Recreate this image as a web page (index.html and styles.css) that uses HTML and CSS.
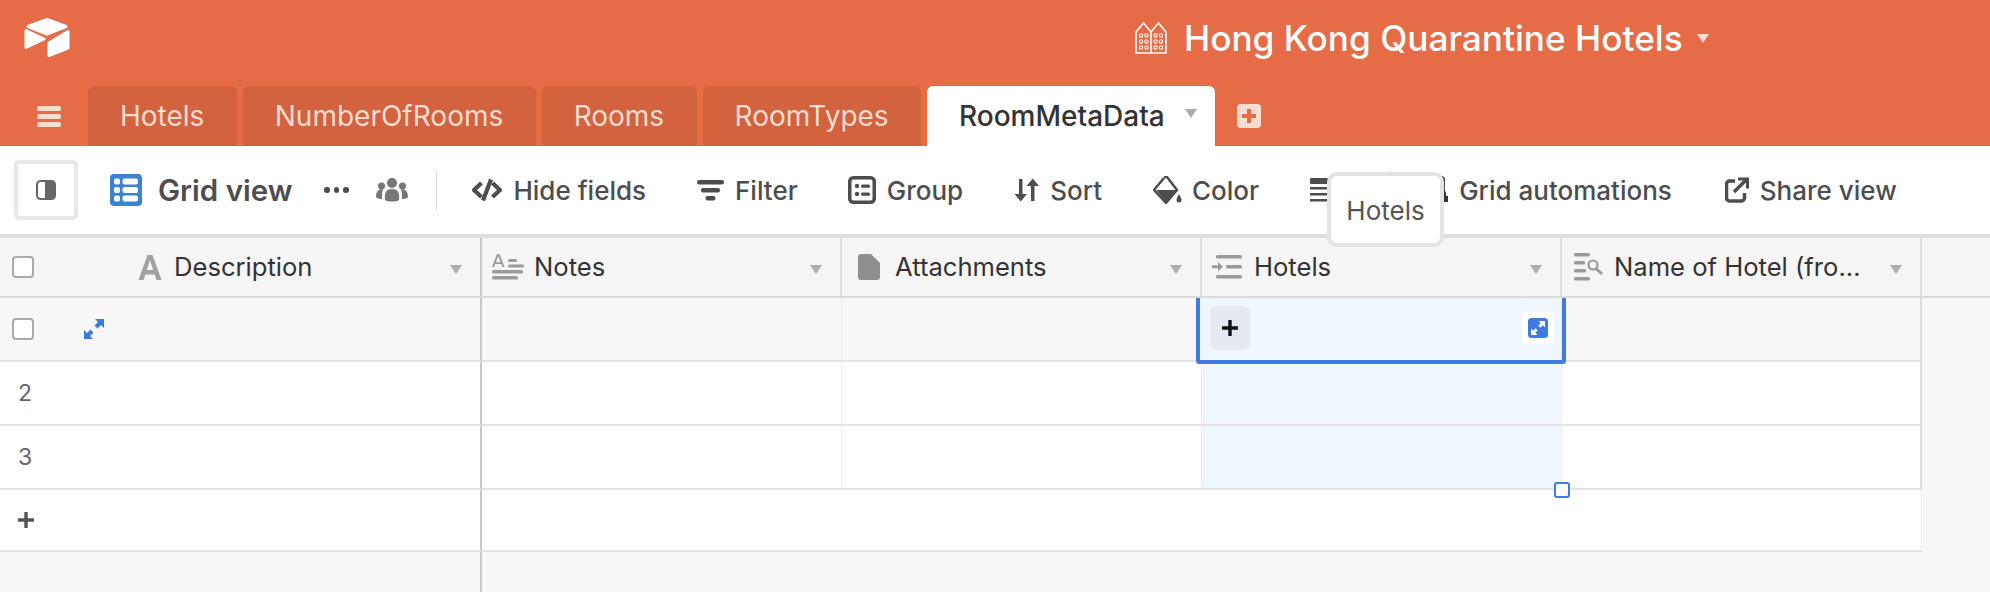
FILE: index.html
```html
<!DOCTYPE html>
<html lang="en">
<head>
<meta charset="utf-8">
<title>Hong Kong Quarantine Hotels</title>
<link rel="stylesheet" href="styles.css">
</head>
<body>
<header class="appbar">
  <div class="appbar-top">
    <svg class="logo" viewBox="0 0 46 39"><path d="M23 1.500 42 8.500 23 16 4 8.500Z"/><path d="M2 12.500 20 21 2 29.500Z"/><path d="M25 25 44 13.500V30L25 37.500Z"/></svg>
    <div class="base-title">
      <svg class="building" viewBox="0 0 32 32"><path class="outline" d="M1 31V10L8.500 1 16 10 23.500 1 31 10V31ZM16 10V31"/><path class="outline thin" d="M4.500 12h3v3h-3zM10 12h3v3h-3zM19 12h3v3h-3zM24.500 12h3v3h-3zM4.500 18h3v3h-3zM10 18h3v3h-3zM19 18h3v3h-3zM24.500 18h3v3h-3zM4.500 24h3v3h-3zM10 24h3v3h-3zM19 24h3v3h-3zM24.500 24h3v3h-3z"/></svg>
      <span class="base-name">Hong Kong Quarantine Hotels</span>
      <span class="caret caret-light"></span>
    </div>
  </div>
  <nav class="tabs">
    <div class="menu"><span></span><span></span><span></span></div>
    <div class="tab">Hotels</div>
    <div class="tab">NumberOfRooms</div>
    <div class="tab">Rooms</div>
    <div class="tab">RoomTypes</div>
    <div class="tab tab-active">RoomMetaData<span class="caret caret-tab"></span></div>
    <svg class="add-tab" viewBox="0 0 24 24"><rect width="24" height="24" rx="4" fill="#fbdcd2"/><path d="M12 5v14M5 12h14" stroke="#e66c47" stroke-width="4"/></svg>
  </nav>
</header>

<section class="toolbar">
  <div class="side-btn">
    <svg viewBox="0 0 20 20" width="20" height="20"><rect x="1" y="1" width="18" height="18" rx="3.500" fill="#fff" stroke="#666" stroke-width="2"/><path d="M9 1h7a3 3 0 0 1 3 3v12a3 3 0 0 1-3 3H9Z" fill="#666"/></svg>
  </div>
  <svg class="grid-icon" viewBox="0 0 32 32"><rect width="32" height="32" rx="4" fill="#3d82cf"/><g fill="#fff"><rect x="4" y="4.500" width="6" height="6" rx="2"/><rect x="12.500" y="4.500" width="15.500" height="6" rx="2"/><rect x="4" y="13" width="6" height="6" rx="2"/><rect x="12.500" y="13" width="15.500" height="6" rx="2"/><rect x="4" y="21.500" width="6" height="6" rx="2"/><rect x="12.500" y="21.500" width="15.500" height="6" rx="2"/></g></svg>
  <span class="view-name">Grid view</span>
  <div class="dots"><span></span><span></span><span></span></div>
  <svg class="people" viewBox="0 0 32 24" fill="#777"><circle cx="16" cy="5" r="5"/><path d="M9 22c-1-8 2-11 7-11s8 3 7 11c-3 2-11 2-14 0Z"/><circle cx="5.500" cy="8" r="3.500"/><circle cx="26.500" cy="8" r="3.500"/><path d="M0 19c0-5 2-8 7-8-1 3-1 6-1 10-2 0-5-.5-6-2ZM32 19c0-5-2-8-7-8 1 3 1 6 1 10 2 0 5-.5 6-2Z"/></svg>
  <span class="sep"></span>
  <div class="actions">
    <div class="action">
      <svg class="ico" width="32" height="24" viewBox="0 0 32 24" fill="none" stroke="#4d4d4d" stroke-width="4.200" stroke-linejoin="round"><path d="M10.500 5 3 12 10.500 19"/><path d="M21.500 5 29 12 21.500 19"/><path d="M20 1.500 12 22.500"/></svg>
      <span>Hide fields</span>
    </div>
    <div class="action">
      <svg class="ico" width="28" height="24" viewBox="0 0 28 24" fill="#4d4d4d"><rect x="0" y="2" width="27" height="4.500" rx="2"/><rect x="4" y="10" width="19" height="4.500" rx="2"/><rect x="8.500" y="18" width="10" height="4.500" rx="2"/></svg>
      <span>Filter</span>
    </div>
    <div class="action">
      <svg class="ico" width="28" height="28" viewBox="0 0 28 28" fill="none"><rect x="1.750" y="1.750" width="24.500" height="24.500" rx="3.500" stroke="#4d4d4d" stroke-width="3.500"/><g fill="#4d4d4d"><circle cx="9" cy="10" r="2.200"/><circle cx="9" cy="18" r="2.200"/><rect x="13" y="8.500" width="9" height="3.200" rx="1.500"/><rect x="13" y="16.500" width="9" height="3.200" rx="1.500"/></g></svg>
      <span>Group</span>
    </div>
    <div class="action">
      <svg class="ico" width="26" height="24" viewBox="0 0 26 24" fill="#4d4d4d"><path d="M5 1h3.500v15H13L6.750 23.500 .5 16H5ZM17 23h3.500V8H25L18.750 .5 12.500 8H17Z"/></svg>
      <span>Sort</span>
    </div>
    <div class="action">
      <svg class="ico" width="29" height="28" viewBox="0 0 29 28"><path d="M11 1 14 1 24 14 13 27 1 14 11 2" fill="#fff" stroke="#4d4d4d" stroke-width="2.500" stroke-linejoin="round"/><path d="M3 14H23.500L13 26Z" fill="#4d4d4d"/><path d="M26 18c-1.500 3-2.500 4.500-2.500 6a2.500 2.500 0 0 0 5 0c0-1.500-1-3-2.500-6Z" fill="#4d4d4d"/></svg>
      <span>Color</span>
    </div>
    <div class="action">
      <svg class="ico" width="29" height="24" viewBox="0 0 29 24" fill="#4d4d4d"><rect width="18" height="6" rx="1"/><rect y="9" width="18" height="2.500"/><rect y="15" width="18" height="2.500"/><rect y="21" width="18" height="2.500"/><path d="M24 0 28 5H25.500V19H28L24 24 20 19H22.500V5H20Z"/></svg>
    </div>
    <span class="sep sep-inline"></span>
    <div class="action">
      <svg class="ico" width="24" height="28" viewBox="0 0 24 28" fill="#333"><rect x="1.500" y="1.500" width="17" height="20" rx="2" fill="none" stroke="#4d4d4d" stroke-width="3"/><path d="M11 26v-6h2v-2a4 4 0 0 1 8 0v2h2v6Z"/></svg>
      <span>Grid automations</span>
    </div>
    <div class="action action-share">
      <svg class="ico" width="24" height="26" viewBox="0 0 24 26" fill="none" stroke="#4d4d4d" stroke-width="3.500"><path d="M10 4H4.500a3 3 0 0 0-3 3v14a3 3 0 0 0 3 3h12a3 3 0 0 0 3-3v-5" stroke-linejoin="round"/><path d="M9 15 21 3"/><path d="M13 2h9.500v9.500" fill="none" stroke-width="3"/></svg>
      <span>Share view</span>
    </div>
  </div>
  <div class="tooltip">Hotels</div>
</section>

<main class="grid">
  <div class="row row-head">
    <div class="cell c0 head">
      <span class="check"></span>
      <svg class="fi fi-a" width="24" height="26" viewBox="0 0 24 26"><path d="M9.500 1h5l9 25h-5l-1.900-5.500H7.400L5.500 26H.5ZM8.800 16h6.400L12 6Z" fill="#a0a0a0"/></svg>
      <span class="label">Description</span>
      <span class="caret caret-head"></span>
    </div>
    <div class="cell c1 head">
      <svg class="fi" width="32" height="26" viewBox="0 0 32 26" fill="#9a9a9a"><path d="M5 0h2.500L12.500 13h-2L9.300 10H3.200L2 13H0ZM3.800 8.300h4.900L6.250 2Z"/><rect x="16" y="5" width="9" height="3" rx="1.500"/><rect x="16" y="10.500" width="16" height="3" rx="1.500"/><rect y="16" width="31" height="3.500" rx="1.500"/><rect y="22" width="26" height="3.500" rx="1.500"/></svg>
      <span class="label label-notes">Notes</span>
      <span class="caret caret-head"></span>
    </div>
    <div class="cell c2 head">
      <svg class="fi" width="22" height="26" viewBox="0 0 22 26" fill="#8f8f8f"><path d="M3 0h10l9 9v14a3 3 0 0 1-3 3H3a3 3 0 0 1-3-3V3a3 3 0 0 1 3-3Z"/></svg>
      <span class="label label-attach">Attachments</span>
      <span class="caret caret-head"></span>
    </div>
    <div class="cell c3 head">
      <svg class="fi" width="30" height="24" viewBox="0 0 30 24" fill="#9a9a9a"><rect x="4" width="26" height="3.500" rx="1.500"/><rect x="14" y="10" width="16" height="3.500" rx="1.500"/><rect x="4" y="20" width="26" height="3.500" rx="1.500"/><path d="M0 10.300h6V7l5 4.700-5 4.700v-3.200H0Z"/></svg>
      <span class="label">Hotels</span>
      <span class="caret caret-head"></span>
    </div>
    <div class="cell c4 head">
      <svg class="fi" width="29" height="28" viewBox="0 0 29 28" fill="#9a9a9a"><rect x="0" y="0" width="16" height="3.500" rx="1.500"/><rect x="0" y="8" width="11" height="3.500" rx="1.500"/><rect x="0" y="16" width="12" height="3.500" rx="1.500"/><rect x="0" y="24" width="16" height="3.500" rx="1.500"/><circle cx="19" cy="12" r="4.500" fill="none" stroke="#9a9a9a" stroke-width="2.200"/><path d="M22 15.500 28 21" stroke="#9a9a9a" stroke-width="3"/></svg>
      <span class="label label-name">Name of Hotel (fro...</span>
      <span class="caret caret-head"></span>
    </div>
  </div>

  <div class="row row-1">
    <div class="cell c0">
      <span class="check"></span>
      <svg class="expand-open" width="20" height="20" viewBox="0 0 20 20" fill="#3d79e0"><path d="M11 0h9v9l-3-3-3.500 3.500-3-3L14 3ZM9 20H0v-9l3 3 3.500-3.500 3 3L6 17Z"/></svg>
    </div>
    <div class="cell c1"></div>
    <div class="cell c2"></div>
    <div class="cell c3 cell-selected">
      <div class="active-cell">
        <span class="link-add"><svg width="16" height="16" viewBox="0 0 16 16"><path d="M8 0v16M0 8h16" stroke="#111" stroke-width="3.400"/></svg></span>
        <span class="expand-box"><svg width="20" height="20" viewBox="0 0 20 20"><rect width="20" height="20" rx="3.500" fill="#4079e0"/><path d="M10.500 3h6.500v6.500l-2.200-2.200-2.500 2.500-2.100-2.100 2.500-2.500ZM9.500 17H3v-6.500l2.200 2.200 2.500-2.500 2.100 2.100-2.500 2.500Z" fill="#fff"/></svg></span>
      </div>
    </div>
    <div class="cell c4"></div>
  </div>

  <div class="row">
    <div class="cell c0"><span class="num">2</span></div>
    <div class="cell c1"></div>
    <div class="cell c2"></div>
    <div class="cell c3 cell-selected"></div>
    <div class="cell c4"></div>
  </div>

  <div class="row">
    <div class="cell c0"><span class="num">3</span></div>
    <div class="cell c1"></div>
    <div class="cell c2"></div>
    <div class="cell c3 cell-selected"><span class="handle"></span></div>
    <div class="cell c4"></div>
  </div>

  <div class="row row-add">
    <div class="cell c0"><svg class="add-row" width="16" height="16" viewBox="0 0 16 16"><path d="M8 0v16M0 8h16" stroke="#555" stroke-width="3.400"/></svg></div>
    <div class="cell add-rest"></div>
  </div>

  <div class="grid-foot"><div class="foot-left"></div></div>
</main>
</body>
</html>
```
FILE: styles.css
```css
* { box-sizing: border-box; }

html, body {
  margin: 0;
  height: 592px;
  overflow: hidden;
}

body {
  display: flex;
  flex-direction: column;
  font-family: Inter, "Liberation Sans", sans-serif;
  background: #f7f7f7;
  color: #333;
}

.appbar { background: #e66c47; height: 146px; flex: none; }

.appbar-top {
  height: 86px;
  display: flex;
  align-items: flex-start;
  padding-left: 24px;
}

.logo { width: 46px; height: 39px; margin-top: 18px; fill: #fff; stroke: #fff; stroke-width: 3; stroke-linejoin: round; }

.base-title {
  display: flex;
  align-items: center;
  margin-left: 1065px;
  margin-top: 22px;
  height: 32px;
}

.building { width: 32px; height: 32px; }
.outline { fill: none; stroke: #fff; stroke-width: 1.6; }
.outline.thin { stroke-width: 1; }

.base-name {
  margin-left: 17px;
  font-size: 35.2px;
  font-weight: 500;
  color: #fff;
  white-space: nowrap;
}

.caret {
  width: 0;
  height: 0;
  border-left: 6px solid transparent;
  border-right: 6px solid transparent;
  border-top: 9px solid #aaa;
  flex: none;
}

.caret-light { margin-left: 14px; border-top-color: #fbdcd2; }

.tabs {
  height: 60px;
  display: flex;
  align-items: stretch;
  gap: 6px;
  padding-left: 37px;
}

.menu {
  width: 24px;
  margin-right: 21px;
  padding-top: 20px;
  display: flex;
  flex-direction: column;
  gap: 3.500px;
}
.menu span { display: block; height: 4.500px; border-radius: 2px; background: #fbdcd2; }

.tab {
  display: flex;
  align-items: center;
  padding: 0 32.4px 0 32px;
  border-radius: 6px 6px 0 0;
  background: #d3623f;
  color: #fbdcd2;
  font-size: 28px;
  white-space: nowrap;
}

.tab-active {
  background: #fff;
  color: #333;
  font-weight: 500;
  padding-right: 18px;
}

.caret-tab { margin-left: 20px; margin-top: -6px; }

.add-tab { width: 24px; height: 24px; margin: 18px 0 0 16px; }

.toolbar {
  position: relative;
  z-index: 3;
  flex: none;
  height: 92px;
  display: flex;
  align-items: center;
  padding: 0 0 0 14px;
  background: #fff;
  border-bottom: 4px solid #dedede;
  color: #4d4d4d;
}

.side-btn {
  width: 64px;
  height: 60px;
  display: flex;
  align-items: center;
  justify-content: center;
  border: 4px solid #e8e8e8;
  border-radius: 5px;
  flex: none;
}

.grid-icon { width: 32px; height: 32px; margin-left: 32px; flex: none; }

.view-name {
  margin-left: 16px;
  font-size: 29.5px;
  font-weight: 600;
  white-space: nowrap;
}

.dots { display: flex; gap: 4px; margin-left: 32px; }
.dots span { width: 5.500px; height: 5.500px; border-radius: 50%; background: #4d4d4d; }

.people { width: 32px; height: 24px; margin-left: 27px; flex: none; }

.sep { width: 1px; height: 40px; background: #ddd; margin-left: 28px; flex: none; }

.actions { display: flex; align-items: center; gap: 50.5px; margin-left: 34px; }

.sep-inline { margin-left: 0; margin-right: -16px; }

.action {
  display: flex;
  align-items: center;
  gap: 10.5px;
  font-size: 26px;
  font-weight: 500;
  white-space: nowrap;
}

.action-share { margin-left: 3px; }

.ico { flex: none; }

.tooltip {
  position: absolute;
  left: 1327px;
  top: 26px;
  width: 117px;
  height: 75px;
  padding-top: 2px;
  display: flex;
  align-items: center;
  justify-content: center;
  background: #fff;
  border: 4px solid #e3e3e3;
  border-radius: 10px;
  font-size: 26px;
  color: #555;
}

.grid { flex: 1; display: flex; flex-direction: column; min-height: 0; }

.row { display: flex; height: 64px; flex: none; }
.row-head { height: 60px; background: #f5f5f5; border-bottom: 2px solid #dadada; }
.row-1 { height: 64px; }
.row-add { height: 62px; }

.cell {
  position: relative;
  display: flex;
  align-items: center;
  background: #fff;
  border-bottom: 2px solid #e3e3e3;
  border-right: 1px solid #eee;
  flex: none;
}

.row-1 .cell { background: #f7f7f7; }

.head { background: #f5f5f5; border-bottom: 0; border-right: 2px solid #dcdcdc; }
.head::after {
  content: "";
  position: absolute;
  right: -2px;
  top: -4px;
  width: 2px;
  height: 4px;
  background: #c4c4c4;
}

.c0 { width: 482px; border-right: 2px solid #c9c9c9; padding-left: 12px; }
.head.c0 { border-right-color: #c9c9c9; }
.c1 { width: 360px; padding-left: 10px; }
.c2 { width: 360px; padding-left: 16px; }
.c3 { width: 360px; padding-left: 10px; }
.c4 { width: 360px; padding-left: 12px; border-right: 2px solid #dcdcdc; }

.check {
  width: 22px;
  height: 22px;
  border: 2px solid #aaa;
  border-radius: 4px;
  background: #fff;
  flex: none;
}

.fi { flex: none; }
.fi-a { margin-left: 104px; }

.label {
  margin-left: 12px;
  margin-top: -2px;
  font-size: 25.6px;
  color: #333;
  white-space: nowrap;
}

.label-notes { margin-left: 10px; }
.label-attach { margin-left: 15px; }
.label-name { margin-left: 11px; }

.caret-head { position: absolute; right: 18px; top: 27px; }

.expand-open { margin-left: 50px; }

.num { font-size: 23px; color: #666; margin-left: 6px; }

.cell-selected { background: #f0f6fe; border-right-color: #eee; }
.row-1 .cell-selected { background: #f0f6fe; }

.active-cell {
  position: absolute;
  left: -6px;
  top: 0;
  width: 370px;
  height: 66px;
  z-index: 2;
  display: flex;
  align-items: center;
  justify-content: space-between;
  padding: 0 8px 0 10px;
  border: 4px solid #4079e0;
  border-top: 0;
  border-radius: 0 0 4px 4px;
}

.link-add {
  width: 40px;
  height: 44px;
  margin-top: -2px;
  display: flex;
  align-items: center;
  justify-content: center;
  background: #e5e9f2;
  border-radius: 6px;
}

.expand-box {
  width: 32px;
  height: 32px;
  display: flex;
  align-items: center;
  justify-content: center;
  background: #fff;
  border-radius: 4px;
  margin-top: -2px;
}

.handle {
  position: absolute;
  right: -9px;
  bottom: -10px;
  width: 16px;
  height: 16px;
  background: #fff;
  border: 2px solid #4079e0;
  border-radius: 3px;
  z-index: 2;
}

.add-row { margin-left: 6px; }

.add-rest { width: 1440px; }

.grid-foot { flex: 1; }
.foot-left { width: 482px; height: 100%; border-right: 2px solid #c9c9c9; }
```
